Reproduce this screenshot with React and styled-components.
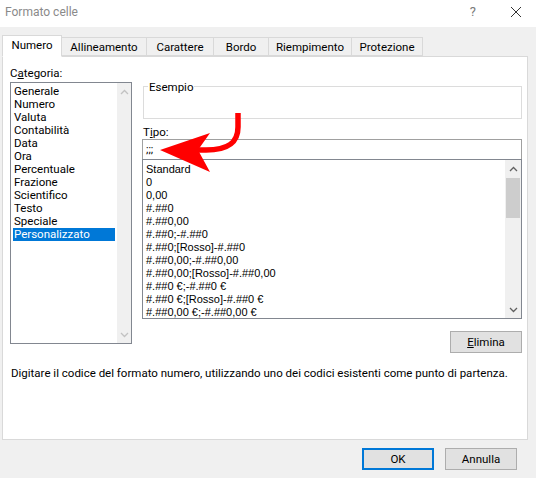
import React from "react";
import styled, { createGlobalStyle } from "styled-components";

const GlobalStyle = createGlobalStyle`
  body {
    margin: 0;
    font-family: Roboto, "Noto Sans", sans-serif;
    font-size: 11.5px;
    color: #000;
  }
`;

const categories = [
  "Generale",
  "Numero",
  "Valuta",
  "Contabilità",
  "Data",
  "Ora",
  "Percentuale",
  "Frazione",
  "Scientifico",
  "Testo",
  "Speciale",
  "Personalizzato",
];

const formats = [
  "Standard",
  "0",
  "0,00",
  "#.##0",
  "#.##0,00",
  "#.##0;-#.##0",
  "#.##0;[Rosso]-#.##0",
  "#.##0,00;-#.##0,00",
  "#.##0,00;[Rosso]-#.##0,00",
  "#.##0 €;-#.##0 €",
  "#.##0 €;[Rosso]-#.##0 €",
  "#.##0,00 €;-#.##0,00 €",
];

const tabs = [
  { label: "Numero", width: 59 },
  { label: "Allineamento", width: 85 },
  { label: "Carattere", width: 67 },
  { label: "Bordo", width: 55 },
  { label: "Riempimento", width: 83 },
  { label: "Protezione", width: 71 },
];

const Chevron = ({ up, color }) => (
  <svg width="9" height="6" viewBox="0 0 9 6">
    <path
      d={up ? "M1 5 L4.5 1.5 L8 5" : "M1 1 L4.5 4.5 L8 1"}
      fill="none"
      stroke={color}
      strokeWidth="1.3"
    />
  </svg>
);

const App = () => {
  return (
    <>
      <GlobalStyle />
      <Window>
        <TitleBar>
          <Title>Formato celle</Title>
          <TitleButtons>
            <HelpGlyph>?</HelpGlyph>
            <svg width="12" height="12" viewBox="0 0 12 12">
              <path d="M1 1 L11 11 M11 1 L1 11" stroke="#333" strokeWidth="1" />
            </svg>
          </TitleButtons>
        </TitleBar>

        <TabRow>
          {tabs.map((t, i) => (
            <Tab key={t.label} active={i === 0} width={t.width}>
              {t.label}
            </Tab>
          ))}
        </TabRow>

        <Panel>
          <Columns>
            <LeftColumn>
              <Label>
                C<u>a</u>tegoria:
              </Label>
              <CategoryBox>
                <ListItems>
                  {categories.map((c) => (
                    <CategoryItem key={c} selected={c === "Personalizzato"}>
                      {c}
                    </CategoryItem>
                  ))}
                </ListItems>
                <ScrollBar>
                  <ScrollArrow>
                    <Chevron up color="#c2c2c2" />
                  </ScrollArrow>
                  <ScrollTrack />
                  <ScrollArrow>
                    <Chevron color="#c2c2c2" />
                  </ScrollArrow>
                </ScrollBar>
              </CategoryBox>
            </LeftColumn>

            <RightColumn>
              <GroupBox>
                <GroupLegend>Esempio</GroupLegend>
              </GroupBox>
              <TipoLabel>
                T<u>i</u>po:
              </TipoLabel>
              <TypeInput>;;;</TypeInput>
              <FormatBox>
                <FormatItems>
                  {formats.map((f) => (
                    <FormatItem key={f}>{f}</FormatItem>
                  ))}
                </FormatItems>
                <ScrollBar wide>
                  <ScrollArrow>
                    <Chevron up color="#606060" />
                  </ScrollArrow>
                  <ScrollTrack>
                    <Thumb />
                  </ScrollTrack>
                  <ScrollArrow>
                    <Chevron color="#606060" />
                  </ScrollArrow>
                </ScrollBar>
              </FormatBox>
              <ButtonRow>
                <Button width={72}>
                  <u>E</u>limina
                </Button>
              </ButtonRow>
            </RightColumn>
          </Columns>
          <Description>
            Digitare il codice del formato numero, utilizzando uno dei codici esistenti come punto di partenza.
          </Description>
        </Panel>

        <Footer>
          <Button width={72} primary>
            OK
          </Button>
          <Button width={72}>Annulla</Button>
        </Footer>

        {/* red annotation arrow pointing at the Tipo field */}
        <Arrow width="100" height="80" viewBox="0 0 100 80">
          <path
            d="M80 2 L80 16 C80 32 70 39 48 39 L40 39"
            fill="none"
            stroke="#ff0000"
            strokeWidth="5.5"
          />
          <path d="M2 39 L52 22 L40 39 L52 61 Z" fill="#ff0000" />
        </Arrow>
      </Window>
    </>
  );
};

const Window = styled.div`
  position: relative;
  width: 536px;
  height: 478px;
  background: #f0f0f0;
  overflow: hidden;
`;

const TitleBar = styled.div`
  height: 27px;
  background: #fff;
  display: flex;
  align-items: center;
  justify-content: space-between;
  padding: 0 14px 0 5px;
  box-sizing: border-box;
`;

const Title = styled.span`
  color: #8a8a8a;
  font-size: 12px;
  margin-top: -4px;
`;

const TitleButtons = styled.div`
  display: flex;
  align-items: center;
  gap: 34px;
  margin-top: -4px;
`;

const HelpGlyph = styled.span`
  color: #7a7a7a;
  font-size: 13px;
`;

const TabRow = styled.div`
  display: flex;
  align-items: flex-end;
  padding: 7px 0 0 3px;
  height: 29px;
  box-sizing: border-box;
  position: relative;
  z-index: 1;
`;

const Tab = styled.div`
  width: ${(p) => p.width + 1}px;
  height: ${(p) => (p.active ? "22px" : "19px")};
  padding-bottom: ${(p) => (p.active ? "2px" : "0")};
  margin-left: -1px;
  margin-bottom: ${(p) => (p.active ? "-1px" : "0")};
  display: flex;
  align-items: center;
  justify-content: center;
  background: ${(p) => (p.active ? "#fff" : "#f0f0f0")};
  border: 1px solid #d9d9d9;
  border-bottom-color: ${(p) => (p.active ? "#fff" : "#d9d9d9")};
  box-sizing: border-box;
  line-height: 14px;
`;

const Panel = styled.div`
  margin: 0 8px 0 2px;
  height: 384px;
  background: #fff;
  border: 1px solid #d9d9d9;
  box-sizing: border-box;
  padding: 9px 5px 0 7px;
  display: flex;
  flex-direction: column;
`;

const Columns = styled.div`
  display: flex;
  gap: 10px;
`;

const LeftColumn = styled.div`
  width: 122px;
  display: flex;
  flex-direction: column;
`;

const RightColumn = styled.div`
  flex: 1;
  display: flex;
  flex-direction: column;
  padding-top: 20px;
`;

const Label = styled.div`
  line-height: 14px;
  margin-bottom: 2px;
`;

const CategoryBox = styled.div`
  height: 262px;
  border: 1px solid #828790;
  display: flex;
  box-sizing: border-box;
`;

const ListItems = styled.div`
  flex: 1;
  padding: 2px 2px;
`;

const CategoryItem = styled.div`
  line-height: 13px;
  height: 13px;
  padding-left: 1px;
  background: ${(p) => (p.selected ? "#0078d7" : "transparent")};
  color: ${(p) => (p.selected ? "#fff" : "#000")};
`;

const ScrollBar = styled.div`
  width: ${(p) => (p.wide ? "16px" : "14px")};
  background: #f0f0f0;
  display: flex;
  flex-direction: column;
`;

const ScrollArrow = styled.div`
  height: 17px;
  display: flex;
  align-items: center;
  justify-content: center;
`;

const ScrollTrack = styled.div`
  flex: 1;
`;

const Thumb = styled.div`
  margin: 1px 1px 0;
  height: 40px;
  background: #cdcdcd;
`;

const GroupBox = styled.div`
  position: relative;
  height: 33px;
  border: 1px solid #dcdcdc;
  box-sizing: border-box;
  margin-left: 1px;
`;

const GroupLegend = styled.span`
  position: absolute;
  top: -7px;
  left: 4px;
  background: #fff;
  padding: 0 1px;
  line-height: 14px;
`;

const TipoLabel = styled.div`
  line-height: 14px;
  margin: 6px 0 0 1px;
`;

const TypeInput = styled.div`
  height: 20px;
  border: 1px solid #a0a0a0;
  border-bottom: none;
  box-sizing: border-box;
  padding: 0 3px;
  line-height: 19px;
`;

const FormatBox = styled.div`
  height: 160px;
  border: 1px solid #828790;
  box-sizing: border-box;
  display: flex;
`;

const FormatItems = styled.div`
  flex: 1;
  padding: 3px 3px 0;
`;

const FormatItem = styled.div`
  font-family: "Liberation Sans", Arial, sans-serif;
  font-size: 11px;
  line-height: 13px;
  height: 13px;
  color: #000;
`;

const ButtonRow = styled.div`
  display: flex;
  justify-content: flex-end;
  margin-top: 12px;
`;

const Button = styled.div`
  width: ${(p) => p.width}px;
  height: 22px;
  box-sizing: border-box;
  display: flex;
  align-items: center;
  justify-content: center;
  background: #e1e1e1;
  border: ${(p) => (p.primary ? "2px solid #0078d7" : "1px solid #adadad")};
`;

const Description = styled.div`
  line-height: 16px;
  margin: 12px 0 0 1px;
  white-space: nowrap;
`;

const Footer = styled.div`
  display: flex;
  justify-content: flex-end;
  gap: 11px;
  padding: 8px 19px 0 0;
`;

const Arrow = styled.svg`
  position: absolute;
  left: 158px;
  top: 111px;
  pointer-events: none;
`;

export default App;
